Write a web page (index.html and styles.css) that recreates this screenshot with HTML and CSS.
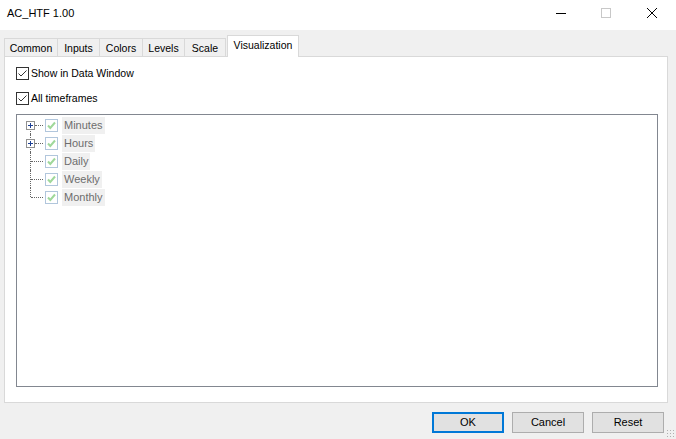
FILE: index.html
```html
<!DOCTYPE html>
<html lang="en">
<head>
    <meta charset="UTF-8">
    <title>AC_HTF 1.00</title>
    <link rel="stylesheet" href="styles.css">
</head>
<body>
    <!-- barra del titolo -->
    <div class="titlebar">
        <span class="title">AC_HTF 1.00</span>
        <div class="wincontrols">
            <span class="wbtn"><svg width="12" height="12" viewBox="0 0 12 12"><path d="M1 6.5h10" stroke="#000" stroke-width="1"/></svg></span>
            <span class="wbtn"><svg width="12" height="12" viewBox="0 0 12 12"><rect x="1.5" y="1.5" width="9" height="9" fill="none" stroke="#c8c8c8"/></svg></span>
            <span class="wbtn"><svg width="12" height="12" viewBox="0 0 12 12"><path d="M1 1L11 11M11 1L1 11" stroke="#000" stroke-width="1"/></svg></span>
        </div>
    </div>
    <!-- schede -->
    <div class="tabs">
        <div class="tab t-common">Common</div>
        <div class="tab t-inputs">Inputs</div>
        <div class="tab t-colors">Colors</div>
        <div class="tab t-levels">Levels</div>
        <div class="tab t-scale">Scale</div>
        <div class="tab sel">Visualization</div>
    </div>
    <div class="panel">
        <label class="check"><span class="box"><svg width="11" height="11" viewBox="0 0 11 11"><path d="M1.5 5.5L4 8L9.5 2.5" fill="none" stroke="#333" stroke-width="1"/></svg></span>Show in Data Window</label>
        <label class="check"><span class="box"><svg width="11" height="11" viewBox="0 0 11 11"><path d="M1.5 5.5L4 8L9.5 2.5" fill="none" stroke="#333" stroke-width="1"/></svg></span>All timeframes</label>
        <div class="tree">
            <div class="node">
                <span class="exp"><svg class="plus" width="9" height="9" viewBox="0 0 9 9"><rect x="0.5" y="0.5" width="8" height="8" fill="#fff" stroke="#919191"/><path d="M2 4.5h5M4.5 2v5" stroke="#1c3f94"/></svg></span><span class="dots"></span>
                <span class="tbox"><svg width="11" height="11" viewBox="0 0 11 11"><path d="M2 5.5L4.3 8L9 2.5" fill="none" stroke="#9fd89a" stroke-width="2"/></svg></span><span class="lbl">Minutes</span>
            </div>
            <div class="node">
                <span class="exp"><svg class="plus" width="9" height="9" viewBox="0 0 9 9"><rect x="0.5" y="0.5" width="8" height="8" fill="#fff" stroke="#919191"/><path d="M2 4.5h5M4.5 2v5" stroke="#1c3f94"/></svg></span><span class="dots"></span>
                <span class="tbox"><svg width="11" height="11" viewBox="0 0 11 11"><path d="M2 5.5L4.3 8L9 2.5" fill="none" stroke="#9fd89a" stroke-width="2"/></svg></span><span class="lbl">Hours</span>
            </div>
            <div class="node">
                <span class="exp line"></span><span class="dots"></span>
                <span class="tbox"><svg width="11" height="11" viewBox="0 0 11 11"><path d="M2 5.5L4.3 8L9 2.5" fill="none" stroke="#9fd89a" stroke-width="2"/></svg></span><span class="lbl">Daily</span>
            </div>
            <div class="node">
                <span class="exp line"></span><span class="dots"></span>
                <span class="tbox"><svg width="11" height="11" viewBox="0 0 11 11"><path d="M2 5.5L4.3 8L9 2.5" fill="none" stroke="#9fd89a" stroke-width="2"/></svg></span><span class="lbl">Weekly</span>
            </div>
            <div class="node">
                <span class="exp last"></span><span class="dots"></span>
                <span class="tbox"><svg width="11" height="11" viewBox="0 0 11 11"><path d="M2 5.5L4.3 8L9 2.5" fill="none" stroke="#9fd89a" stroke-width="2"/></svg></span><span class="lbl">Monthly</span>
            </div>
        </div>
    </div>
    <!-- pulsanti -->
    <div class="buttons">
        <button class="btn default">OK</button>
        <button class="btn">Cancel</button>
        <button class="btn">Reset</button>
    </div>
    <span class="grip"></span>
</body>
</html>
```

FILE: styles.css
```css
html, body{
    margin: 0;
    padding: 0;
}
body{
    width: 676px;
    height: 439px;
    background-color: #f0f0f0;
    font-family: "Liberation Sans", Arial, sans-serif;
    font-size: 10.5px;
    color: #000;
    position: relative;
    overflow: hidden;
}
.titlebar{
    height: 30px;
    background-color: #fff;
    display: flex;
    align-items: center;
    justify-content: space-between;
}
.title{
    padding-left: 7px;
    padding-bottom: 4px;
    font-size: 11px;
}
.wincontrols{
    display: flex;
    height: 30px;
    padding-bottom: 4px;
}
.wbtn{
    width: 45px;
    display: flex;
    align-items: center;
    justify-content: center;
}
.wbtn:last-child{
    width: 48px;
}
.tabs{
    display: flex;
    align-items: flex-end;
    padding-left: 4px;
    margin-top: 5px;
    height: 21px;
    position: relative;
    z-index: 1;
}
.tab{
    height: 18px;
    line-height: 18px;
    border: 1px solid #d9d9d9;
    border-bottom: none;
    border-left: none;
    background-color: #f0f0f0;
    box-sizing: border-box;
    text-align: center;
}
.t-common{
    width: 54px;
    border-left: 1px solid #d9d9d9;
}
.t-inputs{ width: 42px; }
.t-colors{ width: 43px; }
.t-levels{ width: 42px; }
.t-scale{ width: 41px; }
.tab.sel{
    width: 72px;
    height: 22px;
    line-height: 18px;
    background-color: #fff;
    margin-left: 1px;
    margin-bottom: -1px;
    border-left: 1px solid #d9d9d9;
}
.panel{
    margin: 0 8px 0 4px;
    height: 347px;
    background-color: #fff;
    border: 1px solid #d9d9d9;
    box-sizing: border-box;
    padding: 9px 9px 0 11px;
}
.check{
    display: flex;
    align-items: center;
    height: 14px;
    margin-bottom: 11px;
}
.box{
    width: 13px;
    height: 13px;
    border: 1px solid #333;
    box-sizing: border-box;
    display: flex;
    align-items: center;
    justify-content: center;
    margin-right: 2px;
}
.tree{
    margin-top: -2px;
    height: 273px;
    border: 1px solid #828790;
    box-sizing: border-box;
    padding-top: 1px;
}
.node{
    display: flex;
    align-items: center;
    height: 18px;
    position: relative;
}
.exp{
    width: 9px;
    height: 18px;
    margin-left: 9px;
    position: relative;
    display: flex;
    align-items: center;
}
.plus{
    display: block;
    position: relative;
    z-index: 1;
}
.node:first-child .exp::before,
.exp.line::before,
.exp.last::before,
.node:nth-child(2) .exp::before{
    content: "";
    position: absolute;
    left: 4px;
    top: 0;
    bottom: 0;
    border-left: 1px dotted #666;
}
.node:first-child .exp::before{
    top: 9px;
}
.exp.last::before{
    bottom: 9px;
}
.dots{
    width: 8px;
    border-top: 1px dotted #666;
    margin-right: 2px;
}
.exp.line + .dots,
.exp.last + .dots{
    margin-left: -4px;
    width: 12px;
}
.tbox{
    width: 13px;
    height: 13px;
    border: 1px solid #b1c6dc;
    box-sizing: border-box;
    display: flex;
    align-items: center;
    justify-content: center;
    margin-right: 5px;
    background-color: #fff;
}
.lbl{
    background-color: #f0f0f0;
    color: #6d6d6d;
    font-size: 11px;
    height: 17px;
    line-height: 17px;
    padding: 0 2px 0 2px;
    margin-left: -1px;
}
.buttons{
    display: flex;
    justify-content: flex-end;
    gap: 8px;
    padding: 9px 12px 0 0;
}
.btn{
    width: 72px;
    height: 21px;
    background-color: #e1e1e1;
    border: 1px solid #adadad;
    font-family: "Liberation Sans", Arial, sans-serif;
    font-size: 11px;
    padding: 0;
    line-height: 17px;
    color: #000;
}
.btn.default{
    border: 2px solid #0078d7;
}
.grip{
    position: absolute;
    right: 2px;
    bottom: 2px;
    width: 8px;
    height: 8px;
    background-image: radial-gradient(#b0b0b0 0.9px, transparent 1px);
    background-size: 3px 3px;
}
```
